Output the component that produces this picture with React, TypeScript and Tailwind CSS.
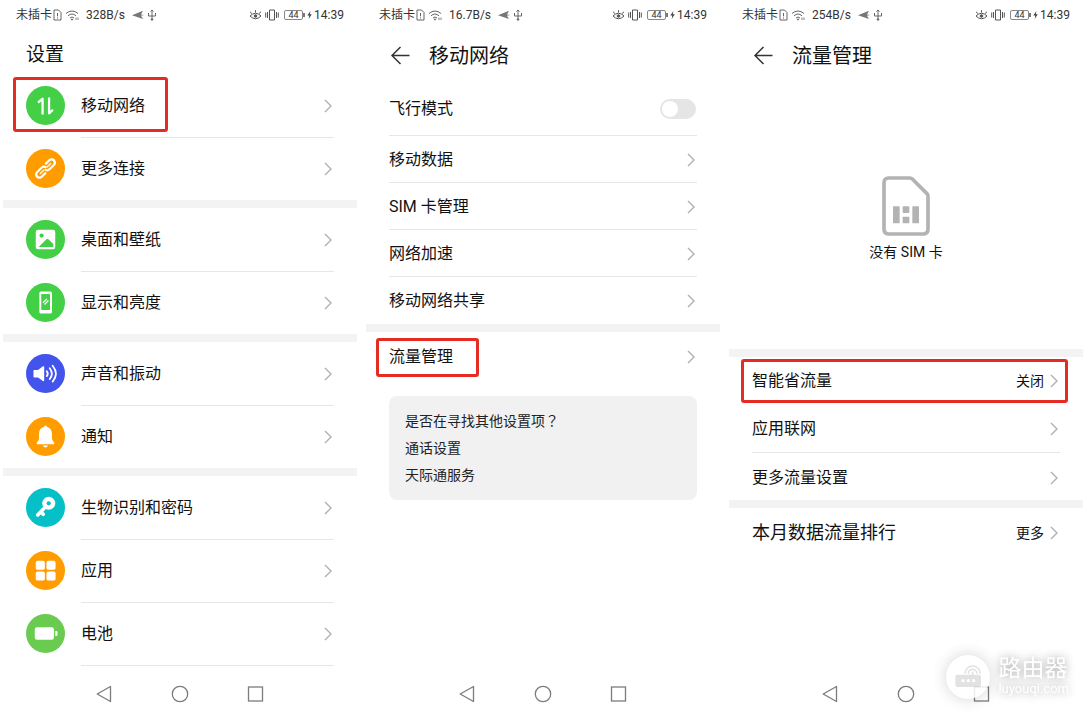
import type { ReactNode } from "react";

type Entry = { label: string; icon: ReactNode; highlighted?: boolean };

const Disc = ({ tone, children }: { tone: string; children: ReactNode }) => (
  <svg viewBox="0 0 120 120" className={`size-[39px] shrink-0 ${tone}`} aria-hidden="true">
    <circle cx="60" cy="60" r="60" fill="currentColor" />
    {children}
  </svg>
);

const DataIcon = () => (
  <Disc tone="text-[#43cf46]">
    <g fill="none" stroke="#fff" strokeWidth="7" strokeLinejoin="round">
      <path d="M37 51 51 39V88" />
      <path d="M71 35V84L83 73" />
    </g>
  </Disc>
);

const LinkIcon = () => (
  <Disc tone="text-[#ff9c00]">
    <g transform="rotate(-44 60 60)" fill="none" stroke="#fff" strokeWidth="7">
      <path d="M52 70H34a10 10 0 0 1 0-20H54a9 9 0 0 1 9 10" />
      <path d="M68 50H86a10 10 0 0 1 0 20H66a9 9 0 0 1-9-10" />
      <path d="M38 60H52M68 60H82" strokeWidth="4" strokeLinecap="round" />
    </g>
  </Disc>
);

const PictureIcon = () => (
  <Disc tone="text-[#43cf46]">
    <rect x="30" y="30" width="60" height="60" rx="7" fill="#fff" />
    <circle cx="48" cy="48" r="6.5" fill="currentColor" />
    <path d="M39 83 63 59q3-3 6 0L84 74V83Z" fill="currentColor" />
  </Disc>
);

const DisplayIcon = () => (
  <Disc tone="text-[#43cf46]">
    <rect x="41" y="26" width="39" height="68" rx="5" fill="#fff" />
    <rect x="47" y="34" width="27" height="49" fill="currentColor" />
    <path d="M52 61 64 49M57 66 69 54" stroke="#fff" strokeWidth="4" />
  </Disc>
);

const SoundIcon = () => (
  <Disc tone="text-[#4254ec]">
    <path d="M25 49H37L52 38q4-2 4 2V81q0 4-4 2L37 72H25q-2 0-2-2V51q0-2 2-2Z" fill="#fff" />
    <g fill="none" stroke="#fff" strokeWidth="5.5" strokeLinecap="round">
      <path d="M64 53q6 8 0 15" />
      <path d="M73 44q13 17 0 33" />
      <path d="M82 36q20 25 0 49" />
    </g>
  </Disc>
);

const BellIcon = () => (
  <Disc tone="text-[#ff9c00]">
    <path
      d="M60 26q4 0 5 5C76 34 80 43 80 54V67q0 5 7 12 2 5-3 5H36q-5 0-3-5 7-7 7-12V54C40 43 44 34 55 31q1-5 5-5Z"
      fill="#fff"
    />
    <path d="M52 88H68q-3 6-8 6t-8-6Z" fill="#fff" />
  </Disc>
);

const KeyIcon = () => (
  <Disc tone="text-[#06c0c8]">
    <path d="M62 56 36 83M46 74l7 7" stroke="#fff" strokeWidth="11" strokeLinecap="round" />
    <circle cx="70" cy="47" r="20" fill="#fff" />
    <circle cx="70" cy="47" r="6.5" fill="currentColor" />
  </Disc>
);

const AppsIcon = () => (
  <Disc tone="text-[#ff9c00]">
    <g fill="#fff">
      <rect x="30" y="30" width="28" height="28" rx="6" />
      <rect x="63" y="30" width="28" height="28" rx="6" />
      <rect x="30" y="63" width="28" height="28" rx="6" />
      <rect x="63" y="63" width="28" height="28" rx="6" />
    </g>
  </Disc>
);

const BatteryIcon = () => (
  <Disc tone="text-[#69cb50]">
    <rect x="27" y="41" width="59" height="38" rx="7" fill="#fff" />
    <path d="M90 52h3q4 0 4 4v8q0 4-4 4h-3Z" fill="#fff" />
  </Disc>
);

const Chevron = () => (
  <svg viewBox="0 0 8 14" className="h-3.5 w-2 shrink-0" fill="none" stroke="#b0b0b0" strokeWidth="1.4" aria-hidden="true">
    <path d="M1 1 7 7 1 13" />
  </svg>
);

const StatusBar = ({ speed }: { speed: string }) => (
  <div className="flex h-[30px] items-center justify-between px-[13px] text-xs text-[#333]">
    <div className="flex items-center">
      <span>未插卡</span>
      <svg viewBox="0 0 9 12" className="ml-px h-3 w-[9px]" fill="none" stroke="#555" strokeWidth="0.9" aria-hidden="true">
        <path d="M1 1H5.5L8 3.5V11H1ZM4.5 4V7.3M4.5 8.4V9.5" />
      </svg>
      <svg viewBox="0 0 14 12" className="ml-[3px] h-3 w-3.5" fill="none" stroke="#666" strokeWidth="1" aria-hidden="true">
        <path d="M1 4.5Q7-.5 13 4.5M3 6.8Q7 3.2 11 6.8M5 9Q7 7 9 9" />
        <circle cx="7" cy="10.5" r="0.6" fill="#666" />
        <path d="M11 8.5V11M13 8.5V11" strokeWidth="0.8" />
      </svg>
      <span className="ml-[7px]">{speed}</span>
      <svg viewBox="0 0 12 10" className="ml-[7px] h-2.5 w-3" aria-hidden="true">
        <path d="M0 5.3 11 .8 9 4.4 12 5 9 5.8 11 9Z" fill="#777" />
      </svg>
      <svg viewBox="0 0 10 12" className="ml-[3px] h-3 w-2.5" fill="none" stroke="#666" strokeWidth="1" aria-hidden="true">
        <path d="M5 1V11M1.5 4V7H8.5V4M3.5 2.5 5 1 6.5 2.5" />
        <circle cx="5" cy="10.5" r="0.8" fill="#666" />
      </svg>
    </div>
    <div className="flex items-center">
      <svg viewBox="0 0 13 12" className="h-3 w-[13px]" fill="none" stroke="#555" strokeWidth="1" aria-hidden="true">
        <path d="M1 7Q6.5 1.5 12 7 6.5 12.5 1 7ZM1 2.8 3 4.6M6.5 1.2V3.6M12 2.8 10 4.6" />
        <circle cx="6.5" cy="7" r="1.3" fill="#555" />
      </svg>
      <svg viewBox="0 0 14 12" className="ml-[3px] h-3 w-3.5" fill="none" stroke="#555" strokeWidth="1" aria-hidden="true">
        <path d="M4.5 1H9.5V11H4.5ZM2.5 3V9M11.5 3V9M.7 3.5V8.5M13.3 3.5V8.5" />
      </svg>
      <span className="ml-[5px] flex h-2.5 w-[19px] items-center justify-center rounded-xs border border-[#888] text-[9px] leading-none">
        44
      </span>
      <span className="h-1 w-0.5 bg-[#777]" />
      <svg viewBox="0 0 5 8" className="mx-0.5 h-2 w-[5px]" aria-hidden="true">
        <path d="M3.4 0 .3 4.6H2.3L1.7 8 4.8 3.3H2.8Z" fill="#444" />
      </svg>
      <span>14:39</span>
    </div>
  </div>
);

const NavBar = () => (
  <nav className="mt-auto flex h-[46px] items-center justify-center gap-[58px]" aria-label="系统导航">
    <button type="button" aria-label="返回">
      <svg viewBox="0 0 18 18" className="size-[18px]" fill="none" stroke="#7c7c7c" strokeWidth="1.3" strokeLinejoin="round">
        <path d="M15.5 1.5V16.5L2.2 9Z" />
      </svg>
    </button>
    <button type="button" aria-label="主屏幕">
      <svg viewBox="0 0 18 18" className="size-[18px]" fill="none" stroke="#7c7c7c" strokeWidth="1.3">
        <circle cx="9" cy="9" r="7.7" />
      </svg>
    </button>
    <button type="button" aria-label="最近任务">
      <svg viewBox="0 0 18 18" className="size-[18px]" fill="none" stroke="#7c7c7c" strokeWidth="1.3">
        <rect x="1.5" y="2" width="14" height="14" />
      </svg>
    </button>
  </nav>
);

const Screen = ({ speed, children }: { speed: string; children: ReactNode }) => (
  <section className="relative flex min-w-0 flex-col">
    <StatusBar speed={speed} />
    {children}
    <NavBar />
  </section>
);

const Band = () => <div className="h-2 bg-[#f3f3f3]" />;

const TitleBar = ({ title }: { title: string }) => (
  <header className="flex h-[50px] items-center gap-[19px] px-6 pt-0.5">
    <button type="button" aria-label="返回">
      <svg viewBox="0 0 20 20" className="size-5" fill="none" stroke="#333" strokeWidth="1.5">
        <path d="M19.5 9.5H2M10.5 1 2 9.5 10.5 18" />
      </svg>
    </button>
    <h2 className="text-xl text-[#111]">{title}</h2>
  </header>
);

const SettingsRow = ({ entry, divided }: { entry: Entry; divided: boolean }) => (
  <button type="button" className="relative flex h-[63px] w-full items-center gap-4 px-[23px] text-left">
    {entry.icon}
    <span
      className={`flex h-full flex-1 items-center justify-between border-t pr-0.5 ${
        divided ? "border-[#e6e6e6]" : "border-transparent"
      }`}
    >
      {entry.label}
      <Chevron />
    </span>
    {entry.highlighted && (
      <span className="absolute left-2.5 top-[3px] h-[55px] w-[155px] rounded-[3px] border-3 border-[#e62b22]" />
    )}
  </button>
);

const LineRow = ({
  label,
  value,
  size = "h-12",
  divided = false,
  large = false,
  children,
}: {
  label: string;
  value?: string;
  size?: string;
  divided?: boolean;
  large?: boolean;
  children?: ReactNode;
}) => (
  <button type="button" className={`relative block w-full px-[23px] text-left ${size}`}>
    <span
      className={`flex h-full items-center border-t pr-0.5 ${divided ? "border-[#e6e6e6] pt-0.5" : "border-transparent"} ${
        large ? "text-lg" : "text-base"
      }`}
    >
      <span className="flex-1">{label}</span>
      {value && <span className="mr-1.5 text-sm">{value}</span>}
      <Chevron />
    </span>
    {children}
  </button>
);

const groups: Entry[][] = [
  [
    { label: "移动网络", icon: <DataIcon />, highlighted: true },
    { label: "更多连接", icon: <LinkIcon /> },
  ],
  [
    { label: "桌面和壁纸", icon: <PictureIcon /> },
    { label: "显示和亮度", icon: <DisplayIcon /> },
  ],
  [
    { label: "声音和振动", icon: <SoundIcon /> },
    { label: "通知", icon: <BellIcon /> },
  ],
  [
    { label: "生物识别和密码", icon: <KeyIcon /> },
    { label: "应用", icon: <AppsIcon /> },
    { label: "电池", icon: <BatteryIcon /> },
  ],
];

const SettingsScreen = () => (
  <Screen speed="328B/s">
    <h2 className="flex h-11 items-center px-[23px] pt-1.5 text-[19px] text-[#111]">设置</h2>
    {groups.map((group, g) => (
      <div key={group[0].label}>
        {g > 0 && <Band />}
        {group.map((entry, i) => (
          <SettingsRow key={entry.label} entry={entry} divided={i > 0} />
        ))}
      </div>
    ))}
    <div className="ml-[78px] mr-[23px] h-px bg-[#e6e6e6]" />
  </Screen>
);

const NetworkScreen = () => (
  <Screen speed="16.7B/s">
    <TitleBar title="移动网络" />
    <label className="flex h-[55px] items-center justify-between pl-[23px] pr-6 pt-0.5">
      飞行模式
      <input
        type="checkbox"
        role="switch"
        className="h-5 w-9 appearance-none rounded-full bg-[#e5e5e5] p-0.5 before:block before:size-4 before:rounded-full before:bg-white checked:bg-[#0a7cff] checked:before:translate-x-4"
      />
    </label>
    <div className="pb-px">
      {["移动数据", "SIM 卡管理", "网络加速", "移动网络共享"].map((label) => (
        <LineRow key={label} label={label} size="h-[47px]" divided />
      ))}
    </div>
    <Band />
    <LineRow label="流量管理">
      <span className="absolute left-2.5 top-1.5 h-[39px] w-[103px] rounded-[3px] border-3 border-[#e62b22]" />
    </LineRow>
    <div className="mx-[23px] mt-4 flex flex-col items-start gap-[7px] rounded-lg bg-[#f1f1f1] px-4 pb-[15px] pt-3.5 text-sm leading-5 text-[#222]">
      <p>
        是否在寻找其他设置项
        <span className="font-['Noto_Sans_CJK_TC',sans-serif]" lang="zh-TW">？</span>
      </p>
      <a href="#call">通话设置</a>
      <a href="#skytone">天际通服务</a>
    </div>
  </Screen>
);

const Watermark = () => (
  <div className="pointer-events-none absolute bottom-[18px] right-3.5 flex items-center gap-2 text-white">
    <svg viewBox="0 0 132 132" className="size-11 opacity-85 drop-shadow-[0_0_8px_rgba(0,0,0,0.2)]" aria-hidden="true">
      <circle cx="66" cy="66" r="66" fill="#fff" />
      <rect x="28" y="59" width="77" height="37" rx="6" fill="#dedede" />
      <g fill="none" stroke="#dedede" strokeWidth="5">
        <path d="M57 56a23 23 0 0 1 46 0M67 56a13 13 0 0 1 26 0" />
        <path d="M80 50V62" />
      </g>
      <g fill="#fff">
        <circle cx="51" cy="77" r="5" />
        <circle cx="67" cy="77" r="5" />
        <circle cx="83" cy="77" r="5" />
      </g>
    </svg>
    <div className="pb-1 drop-shadow-[0_0_5px_rgba(0,0,0,0.4)]">
      <p className="text-[23px] leading-7">路由器</p>
      <p className="text-[13px] leading-3">luyouqi.com</p>
    </div>
  </div>
);

const TrafficScreen = () => (
  <Screen speed="254B/s">
    <TitleBar title="流量管理" />
    <div className="flex flex-col items-center gap-1.5 pb-[87px] pt-24">
      <svg viewBox="0 0 144 180" className="h-[60px] w-12" aria-hidden="true">
        <path
          d="M20 6H84q4 0 7 3L135 53q3 3 3 7V159q0 15-15 15H21q-15 0-15-15V21Q6 6 20 6Z"
          fill="none"
          stroke="#b3b3b3"
          strokeWidth="11"
        />
        <g fill="#b3b3b3">
          <rect x="33" y="91" width="20" height="51" rx="2" />
          <rect x="62" y="91" width="20" height="20" rx="2" />
          <rect x="62" y="122" width="20" height="20" rx="2" />
          <rect x="91" y="91" width="20" height="51" rx="2" />
        </g>
      </svg>
      <p className="text-sm">没有 SIM 卡</p>
    </div>
    <Band />
    <LineRow label="智能省流量" value="关闭" size="h-[47px]">
      <span className="absolute left-3 right-[15px] top-0.5 h-11 rounded-[3px] border-3 border-[#e62b22]" />
    </LineRow>
    <LineRow label="应用联网" />
    <LineRow label="更多流量设置" divided />
    <Band />
    <LineRow label="本月数据流量排行" value="更多" large />
    <Watermark />
  </Screen>
);

export default function App() {
  return (
    <main className="grid min-h-screen grid-cols-3 gap-[9px] bg-white px-[3px] font-[Roboto,'Noto_Sans_CJK_SC',sans-serif] text-base text-[#111]">
      <SettingsScreen />
      <NetworkScreen />
      <TrafficScreen />
    </main>
  );
}
